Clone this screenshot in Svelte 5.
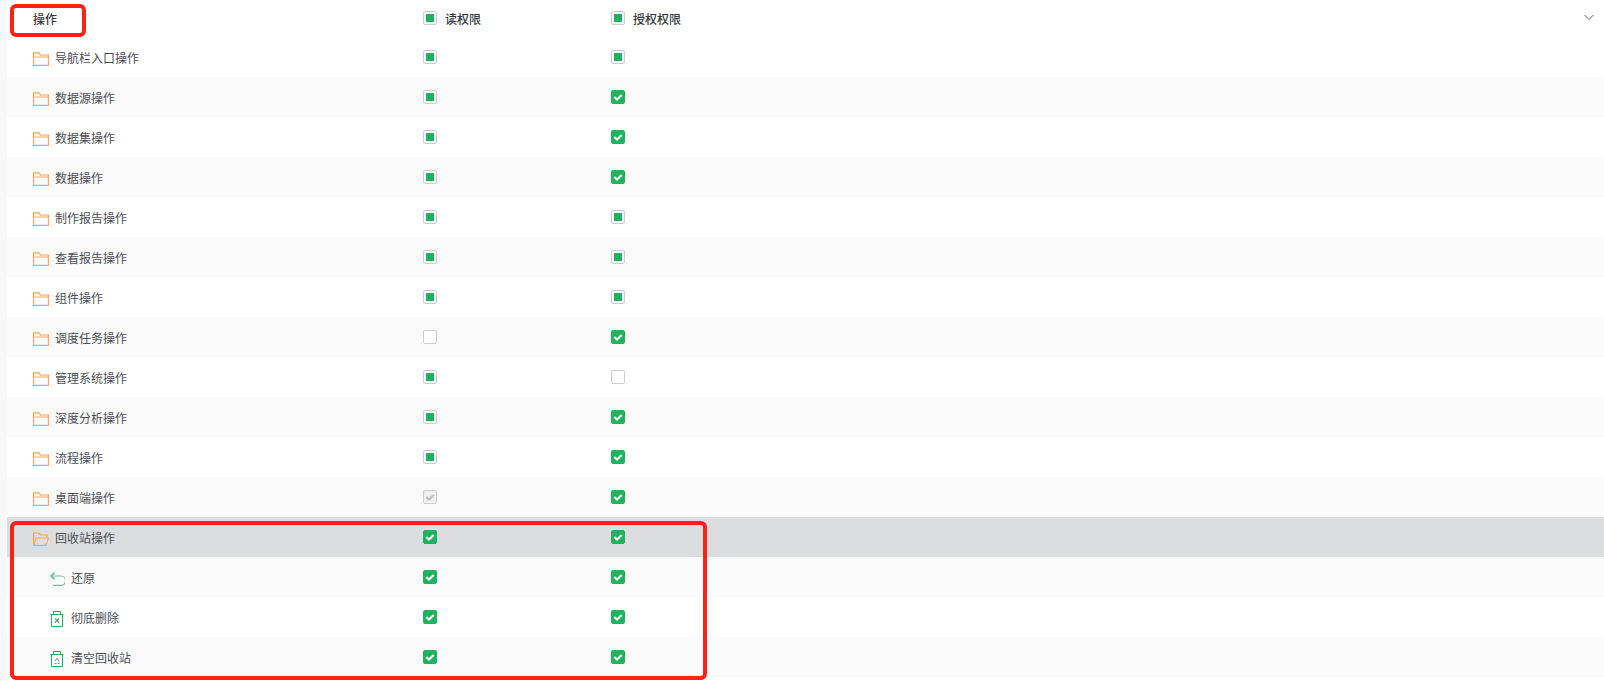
<script>
  // p = partial, c = checked, n = empty, d = disabled checked
  const rows = [
    { name: '导航栏入口操作', read: 'p', grant: 'p' },
    { name: '数据源操作', read: 'p', grant: 'c' },
    { name: '数据集操作', read: 'p', grant: 'c' },
    { name: '数据操作', read: 'p', grant: 'c' },
    { name: '制作报告操作', read: 'p', grant: 'p' },
    { name: '查看报告操作', read: 'p', grant: 'p' },
    { name: '组件操作', read: 'p', grant: 'p' },
    { name: '调度任务操作', read: 'n', grant: 'c' },
    { name: '管理系统操作', read: 'p', grant: 'n' },
    { name: '深度分析操作', read: 'p', grant: 'c' },
    { name: '流程操作', read: 'p', grant: 'c' },
    { name: '桌面端操作', read: 'd', grant: 'c' },
    { name: '回收站操作', read: 'c', grant: 'c', open: true, selected: true },
    { name: '还原', read: 'c', grant: 'c', icon: 'undo' },
    { name: '彻底删除', read: 'c', grant: 'c', icon: 'delete' },
    { name: '清空回收站', read: 'c', grant: 'c', icon: 'clear' }
  ];
</script>

{#snippet checkbox(state)}
  <span class="box {state}">
    {#if state === 'c' || state === 'd'}
      <svg width="14" height="14" viewBox="0 0 14 14"><path d="M3.3 7 6 9.6 10.7 4.9" fill="none" stroke="currentColor" stroke-width="2.1" /></svg>
    {/if}
  </span>
{/snippet}

<div class="page">
  <div class="table">
    <div class="row head">
      <div class="name">操作</div>
      <div class="cell">{@render checkbox('p')}<span class="label">读权限</span></div>
      <div class="cell">{@render checkbox('p')}<span class="label">授权权限</span></div>
      <svg class="chevron" width="10" height="7" viewBox="0 0 10 7"><path d="M.6 1 5 5.6 9.4 1" fill="none" stroke="#666" stroke-width="1" /></svg>
    </div>
    {#each rows as row}
      <div class="row" class:selected={row.selected}>
        <div class="name" class:leaf={row.icon}>
          {#if row.icon === 'undo'}
            <svg class="icon" width="15" height="14" viewBox="0 0 15 14" fill="none" stroke="#35b56e" stroke-width="1.2">
              <path d="M4.6 .6 1 4 4.6 7.4" />
              <path d="M1.2 4H10.8a3.7 3.7 0 0 1 0 9.4H3" stroke="#72c59a" />
            </svg>
          {:else if row.icon === 'delete'}
            <svg class="icon trash" width="14" height="16" viewBox="0 0 14 16" fill="none" stroke="#1fb160" stroke-width="1">
              <path d="M3.5 3.5V.5H10.5V3.5M.5 3.5H13.5M1.5 3.5 1.5 15.5H12.5L12.5 3.5" />
              <path d="M5 7.5 9 11.5M9 7.5 5 11.5" stroke-width="1.2" stroke="#4e9c80" />
            </svg>
          {:else if row.icon === 'clear'}
            <svg class="icon trash" width="14" height="16" viewBox="0 0 14 16" fill="none" stroke="#1fb160" stroke-width="1">
              <path d="M3.5 3.5V.5H10.5V3.5M.5 3.5H13.5M1.5 3.5 1.5 15.5H12.5L12.5 3.5" />
              <path d="M7 7 5 10.2M7 7 9 10.2M4.5 12.5H6.5M7.5 12.5H9.5" stroke="#5aa98a" />
            </svg>
          {:else if row.open}
            <svg class="folder" width="16" height="14" viewBox="0 0 16 14" fill="none" stroke="#ffa33f" stroke-width="1.2">
              <path d="M.6 13V1H6L7.5 3H14V6" />
              <path d="M.6 13.4H13L15.4 6H3.2L.6 13.4Z" stroke="#ffab62" />
            </svg>
          {:else}
            <svg class="folder" width="16" height="14" viewBox="0 0 16 14" fill="none" stroke="#ff9f55" stroke-width="1.2">
              <path d="M.6 5V.8H6L7.5 3H15.4V5" />
              <path d="M.6 5H15.4V13.4H.6Z" stroke="#ffa56a" />
            </svg>
          {/if}
          <span>{row.name}</span>
        </div>
        <div class="cell">{@render checkbox(row.read)}</div>
        <div class="cell">{@render checkbox(row.grant)}</div>
      </div>
    {/each}
  </div>
  <div class="mark mark-head"></div>
  <div class="mark mark-recycle"></div>
</div>

<style>
  :global(body) {
    margin: 0;
    background: #fff;
  }

  .page {
    position: relative;
    height: 681px;
    overflow: hidden;
    padding-left: 7px;
    background: #f6f7f9;
    font-family: "Noto Sans CJK SC", "Liberation Sans", sans-serif;
    font-size: 12px;
    color: #4a4d52;
  }

  .table {
    background: #fff;
    height: 681px;
  }

  .row {
    display: flex;
    align-items: center;
    height: 40px;
    padding-right: 10px;
  }

  .row:nth-child(odd) {
    background: #fafafa;
  }

  .row.head {
    position: relative;
    box-sizing: border-box;
    height: 37px;
    padding-bottom: 1px;
    background: #fff;
    color: #35383d;
    font-weight: 500;
  }

  .row.selected {
    background: #dcdddf;
  }

  .name {
    display: flex;
    align-items: center;
    width: 416px;
    padding-left: 26px;
    box-sizing: border-box;
  }

  .name.leaf {
    padding-left: 43px;
  }

  .folder {
    margin: 4px 6px 0 0;
  }

  .icon {
    margin: 4px 6px 0 0;
  }

  .icon.trash {
    margin-right: 7px;
  }

  .cell {
    display: flex;
    align-items: center;
    width: 188px;
  }

  .label {
    margin-left: 8px;
  }

  .box {
    display: block;
    position: relative;
    width: 14px;
    height: 14px;
    box-sizing: border-box;
    border: 1px solid #ccc;
    border-radius: 2px;
    background: #fff;
  }

  .box svg {
    position: absolute;
    top: -1px;
    left: -1px;
  }

  .box.p::after {
    content: "";
    position: absolute;
    top: 2px;
    left: 2px;
    width: 8px;
    height: 8px;
    background: #1cb25f;
  }

  .box.c {
    border-color: #1fb25f;
    background: #1fb25f;
    color: #fff;
  }

  .box.d {
    background: #f0f0f0;
    color: #bbb;
  }

  .chevron {
    position: absolute;
    top: 14px;
    left: 1577px;
  }

  .mark {
    position: absolute;
    box-sizing: border-box;
    border: 4px solid #ff2016;
    border-radius: 6px;
  }

  .mark-head {
    top: 4px;
    left: 10px;
    width: 76px;
    height: 33px;
  }

  .mark-recycle {
    top: 521px;
    left: 10px;
    width: 697px;
    height: 159px;
  }
</style>
